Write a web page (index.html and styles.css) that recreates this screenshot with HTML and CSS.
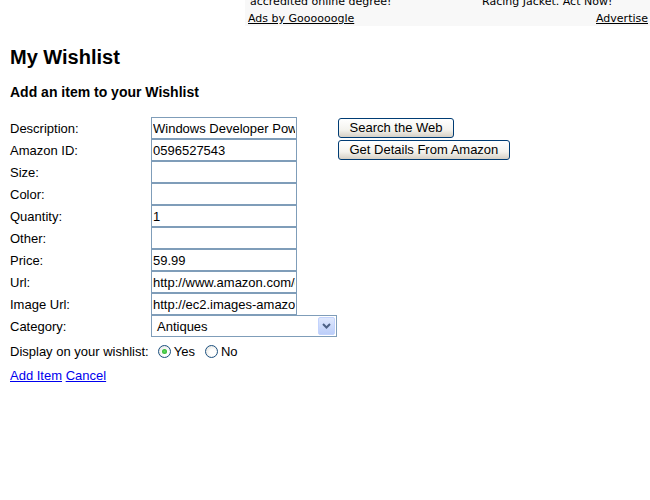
FILE: index.html
```html
<!DOCTYPE html>
<html>
<head>
<meta charset="utf-8">
<link rel="stylesheet" href="styles.css">
</head>
<body>
<div class="ads">
  <div class="ads-row">
    <span class="ad-col ad-first">accredited online degree!</span>
    <span class="ad-col">Racing Jacket. Act Now!</span>
  </div>
  <div class="ads-row ads-foot">
    <a href="#" class="ad-link">Ads by Goooooogle</a>
    <a href="#" class="ad-link">Advertise</a>
  </div>
</div>
<h1 class="title">My Wishlist</h1>
<h2 class="subtitle">Add an item to your Wishlist</h2>
<form class="form">
  <label class="lbl">Description:</label>
  <div class="field"><input class="txt" type="text" value="Windows Developer Power Tools"></div>
  <div class="act"><button type="button" class="btn">Search the Web</button></div>

  <label class="lbl">Amazon ID:</label>
  <div class="field"><input class="txt" type="text" value="0596527543"></div>
  <div class="act"><button type="button" class="btn">Get Details From Amazon</button></div>

  <label class="lbl">Size:</label>
  <div class="field"><input class="txt" type="text" value=""></div>
  <div class="act"></div>

  <label class="lbl">Color:</label>
  <div class="field"><input class="txt" type="text" value=""></div>
  <div class="act"></div>

  <label class="lbl">Quantity:</label>
  <div class="field"><input class="txt" type="text" value="1"></div>
  <div class="act"></div>

  <label class="lbl">Other:</label>
  <div class="field"><input class="txt" type="text" value=""></div>
  <div class="act"></div>

  <label class="lbl">Price:</label>
  <div class="field"><input class="txt" type="text" value="59.99"></div>
  <div class="act"></div>

  <label class="lbl">Url:</label>
  <div class="field"><input class="txt" type="text" value="http://www.amazon.com/gp/product/0596527543"></div>
  <div class="act"></div>

  <label class="lbl">Image Url:</label>
  <div class="field"><input class="txt" type="text" value="http://ec2.images-amazon.com/images/P/0596527543.jpg"></div>
  <div class="act"></div>

  <label class="lbl">Category:</label>
  <div class="field">
    <div class="select">
      <span class="select-val">Antiques</span>
      <span class="select-btn">
        <svg width="9" height="6" viewBox="0 0 9 6"><path d="M1 1 L4.5 4.5 L8 1" fill="none" stroke="#4d6185" stroke-width="2"/></svg>
      </span>
    </div>
  </div>
  <div class="act"></div>
</form>
<div class="display">
  <span class="display-lbl">Display on your wishlist:</span>
  <span class="radio checked"></span><span class="rtxt">Yes</span>
  <span class="radio"></span><span class="rtxt">No</span>
</div>
<div class="links"><a href="#">Add Item</a> <a href="#">Cancel</a></div>
</body>
</html>
```
FILE: styles.css
```css
html, body { margin: 0; padding: 0; background: #fff; }
body { font-family: "Liberation Sans", Arial, sans-serif; font-size: 13px; color: #000; }

.ads {
  margin-left: 245px;
  height: 26px;
  background: #f8f8f8;
  font-family: "DejaVu Sans", Verdana, sans-serif;
  font-size: 11px;
  overflow: hidden;
}
.ads-row { display: flex; line-height: 12px; }
.ads-row:first-child { margin-top: -4px; }
.ad-col { display: block; }
.ad-first { width: 232px; padding-left: 5px; }
.ads-foot { justify-content: space-between; margin-top: 5px; padding-left: 3px; padding-right: 2px; }
.ad-link { color: #000; text-decoration: underline; }

.title { font-size: 20px; font-weight: bold; margin: 20px 0 0 10px; line-height: 23px; }
.subtitle { font-size: 14px; font-weight: bold; margin: 15px 0 0 10px; line-height: 17px; }

.form {
  display: grid;
  grid-template-columns: 141px 187px auto;
  grid-auto-rows: 22px;
  margin: 16px 0 0 10px;
}
.lbl { display: flex; align-items: center; line-height: 15px; }
.field { display: flex; align-items: center; }
.txt {
  box-sizing: border-box;
  width: 146px;
  height: 22px;
  border: 1px solid #7f9db9;
  padding: 0 1px;
  margin: 0;
  font-family: "Liberation Sans", Arial, sans-serif;
  font-size: 13px;
  color: #000;
  background: #fff;
  outline: none;
}
.act { display: flex; align-items: center; }
.btn {
  box-sizing: border-box;
  height: 20px;
  padding: 0 10.5px;
  margin: 0;
  border: 1px solid #003c74;
  border-radius: 3px;
  background: linear-gradient(#ffffff, #f4f3ee 60%, #d6d0c5);
  font-family: "Liberation Sans", Arial, sans-serif;
  font-size: 13px;
  color: #000;
  line-height: 16px;
}

.select {
  box-sizing: border-box;
  width: 186px;
  height: 22px;
  border: 1px solid #7f9db9;
  display: flex;
  align-items: center;
  justify-content: space-between;
  background: #fff;
}
.select-val { padding-left: 5px; }
.select-btn {
  width: 17px;
  height: 18px;
  margin-right: 1px;
  border-radius: 2px;
  background: linear-gradient(#dfe8fd, #bccef9);
  border: 1px solid #c3d3fd;
  box-sizing: border-box;
  display: flex;
  align-items: center;
  justify-content: center;
}

.display {
  display: flex;
  align-items: center;
  margin: 5px 0 0 10px;
  height: 18px;
}
.display-lbl { margin-right: 9px; }
.radio {
  box-sizing: border-box;
  width: 13px;
  height: 13px;
  border-radius: 50%;
  border: 1px solid #1c5180;
  background: radial-gradient(circle at 60% 60%, #ffffff 30%, #dcdcd6 100%);
  position: relative;
  margin-right: 3px;
}
.radio.checked::after {
  content: "";
  position: absolute;
  left: 3px; top: 3px;
  width: 5px; height: 5px;
  border-radius: 50%;
  background: radial-gradient(circle, #5fe05f, #21a121);
}
.rtxt { margin-right: 10px; }

.links { margin: 8px 0 0 10px; line-height: 15px; }
.links a { color: #0000ee; text-decoration: underline; }
```
